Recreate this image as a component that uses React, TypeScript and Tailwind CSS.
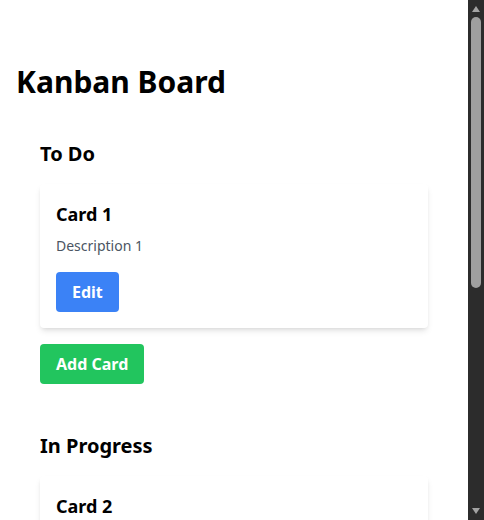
type Card = { id: number; title: string; description: string };
type Column = { id: string; title: string; cards: Card[] };

const columns: Column[] = [
  { id: "todo", title: "To Do", cards: [{ id: 1, title: "Card 1", description: "Description 1" }] },
  { id: "progress", title: "In Progress", cards: [{ id: 2, title: "Card 2", description: "Description 2" }] },
  { id: "done", title: "Done", cards: [{ id: 3, title: "Card 3", description: "Description 3" }] },
];

const KanbanColumn = ({ column }: { column: Column }) => (
  <div className="p-6">
    <h2 className="mb-4 text-xl font-bold">{column.title}</h2>
    {column.cards.map((card) => (
      <div key={card.id} className="mb-4 rounded bg-white p-4 shadow-[0_4px_6px_-1px_rgba(0,0,0,0.1),0_2px_4px_-2px_rgba(0,0,0,0.1)]">
        <h3 className="mb-2 text-lg font-bold">{card.title}</h3>
        <p className="mb-4 text-sm text-[#4b5563]">{card.description}</p>
        <button className="rounded bg-[#3b82f6] px-4 py-2 font-bold text-white">Edit</button>
      </div>
    ))}
    <button className="rounded bg-[#22c55e] px-4 py-2 font-bold text-white">Add Card</button>
  </div>
);

// fake window scrollbar, the reference shows the browser's dark one
const Scrollbar = () => (
  <div className="flex w-4 shrink-0 flex-col items-center bg-[#2c2c2c]">
    <svg width="16" height="17" viewBox="0 0 16 17" className="shrink-0">
      <path d="M4 12 L8 6 L12 12 Z" fill="#a3a3a3" />
    </svg>
    <div className="h-[271px] w-[10px] rounded-full bg-[#9f9f9f]" />
    <div className="flex-1" />
    <svg width="16" height="17" viewBox="0 0 16 17" className="shrink-0">
      <path d="M4 5 L12 5 L8 11 Z" fill="#a3a3a3" />
    </svg>
  </div>
);

export default function App() {
  return (
    <div className="flex h-screen bg-white text-black font-['Segoe_UI','Noto_Sans',sans-serif]">
      <div className="min-w-0 flex-1 overflow-hidden">
        <div className="p-4 pt-[64px]">
          <h1 className="mb-4 text-3xl font-bold">Kanban Board</h1>
          {columns.map((col) => (
            <KanbanColumn key={col.id} column={col} />
          ))}
        </div>
      </div>
      <Scrollbar />
    </div>
  );
}
